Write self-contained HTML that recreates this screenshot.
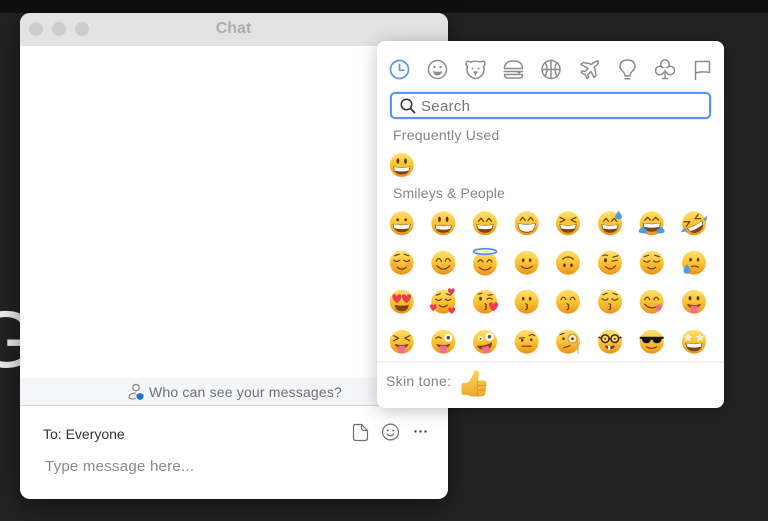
<!DOCTYPE html>
<html><head><meta charset="utf-8"><style>
html,body{margin:0;padding:0;width:768px;height:521px;overflow:hidden;background:#222;font-family:"Liberation Sans",sans-serif}
#all{position:absolute;left:0;top:0;width:768px;height:521px;overflow:hidden;filter:blur(.35px)}
.a{position:absolute;white-space:nowrap}
#band{left:0;top:0;width:768px;height:13px;background:#0f0f0f}
#g{left:-26px;top:294px;font-size:81px;line-height:93px;color:#eee}
#win{left:20px;top:13px;width:428px;height:486px;background:#fff;border-radius:10px;overflow:hidden;box-shadow:0 6px 24px rgba(0,0,0,.45)}
#tb{left:0;top:0;width:428px;height:33px;background:#e3e3e3}
.dot{position:absolute;top:9px;width:14px;height:14px;border-radius:50%;background:#cdcdcd}
#title{left:0;width:427px;top:7px;text-align:center;font-weight:bold;font-size:16px;line-height:18px;color:#acacac}
#ban{left:0;top:365px;width:428px;height:27px;background:#f5f6fa;border-bottom:1px solid #d6d6d8}
#pop{left:377px;top:41px;width:347px;height:367px;background:#fff;border-radius:8px;box-shadow:0 2px 18px rgba(0,0,0,.25)}
#search{left:389.5px;top:92px;width:317px;height:23px;border:2px solid #5c95ea;border-radius:5px;background:#fff;box-shadow:0 0 1px #5c95ea}
.lbl{font-size:14px;line-height:16px;color:#85858b}
svg{position:absolute;left:0;top:0;filter:blur(.25px)}
.e{fill:#5f3812}.l{fill:none;stroke:#6a3f12;stroke-width:1.2;stroke-linecap:round;stroke-linejoin:round}
.m{fill:#7a4615}.t{fill:#fff}.h{fill:#ee3b4e}.o{fill:#ef6d95}.d{fill:#4f9be8}
.i{fill:none;stroke:#8d8d8d;stroke-width:1.5;stroke-linecap:round;stroke-linejoin:round}
.k{fill:none;stroke:#6e6e72;stroke-width:1.2;stroke-linecap:round;stroke-linejoin:round}
</style></head><body>
<div id="all">
<div class="a" id="band"></div>
<div class="a" id="g">G</div>
<div class="a" id="win">
 <div class="a" id="tb">
  <div class="dot" style="left:9px"></div><div class="dot" style="left:32px"></div><div class="dot" style="left:55px"></div>
  <div class="a" id="title">Chat</div>
 </div>
 <div class="a" id="ban"></div>
</div>
<div class="a" style="left:149px;top:384px;font-size:14px;line-height:16px;color:#707074;letter-spacing:.18px">Who can see your messages?</div>
<div class="a" style="left:43px;top:426px;font-size:14px;line-height:16px;color:#333">To: Everyone</div>
<div class="a" style="left:45px;top:458px;font-size:15px;line-height:18px;color:#8a8a8a;letter-spacing:.25px">Type message here...</div>
<div class="a" id="pop"></div>
<div class="a" style="left:377px;top:361px;width:347px;height:2px;background:#f0f0f0"></div>
<div class="a" id="search"></div>
<div class="a" style="left:421px;top:98px;font-size:15px;line-height:18px;color:#76767a;letter-spacing:.3px">Search</div>
<div class="a lbl" style="left:393px;top:127px;letter-spacing:.25px">Frequently Used</div>
<div class="a lbl" style="left:393px;top:185px;letter-spacing:.14px">Smileys &amp; People</div>
<div class="a lbl" style="left:386px;top:373px;letter-spacing:.3px">Skin tone:</div>

<svg width="768" height="521" viewBox="0 0 768 521">
<defs>
<linearGradient id="f" x1="0" y1="0" x2="0" y2="1"><stop offset="0" stop-color="#ffe06e"/><stop offset=".5" stop-color="#fcc433"/><stop offset="1" stop-color="#ec921c"/></linearGradient>
<linearGradient id="u" x1="0" y1="0" x2="0" y2="1"><stop offset="0" stop-color="#ffd35a"/><stop offset="1" stop-color="#eea72c"/></linearGradient>
</defs>

<!-- window icons -->
<g transform="translate(136,392)"><circle cy="-4.500" r="3.200" fill="none" stroke="#7d7d85" stroke-width="1.100"/><path d="M-7 6Q-7 1 0 1M-7 6Q-4 7.500 0 6.500" fill="none" stroke="#7d7d85" stroke-width="1.100"/><path d="M4 1L7.500 2.500V5Q7 7 4 8Q1 7 .5 5V2.500Z" fill="#1a6fd8"/></g>
<path class="k" d="M353.500 426.500Q353.500 424.500 355.500 424.500H361.500L367.500 430.500V438Q367.500 440.500 365 440.500H356Q353.500 440.500 353.500 438ZM361.500 424.500V428Q361.500 430.500 364 430.500H367.500"/>
<g transform="translate(390.500,432)"><circle r="7.900" class="k"/><circle cx="-2.700" cy="-1.500" r="1" fill="#6e6e72"/><circle cx="2.700" cy="-1.500" r="1" fill="#6e6e72"/><path class="k" d="M-3.500 2Q0 5.500 3.500 2"/></g>
<g fill="#444"><circle cx="415.500" cy="431.500" r="1.200"/><circle cx="420.500" cy="431.500" r="1.200"/><circle cx="425.500" cy="431.500" r="1.200"/></g>

<!-- search glass -->
<g transform="translate(406.500,104.500)"><circle r="5.200" fill="none" stroke="#333" stroke-width="1.500"/><path d="M3.800 3.800L8 8" stroke="#333" stroke-width="1.800" stroke-linecap="round"/></g>

<!-- tabs -->
<g transform="translate(399.500,69.500)"><circle r="9" fill="none" stroke="#5c95ea" stroke-width="1.700"/><path d="M0-5V.8H4.500" fill="none" stroke="#5c95ea" stroke-width="1.700" stroke-linecap="round" stroke-linejoin="round"/></g>
<g transform="translate(437.500,69.500)"><circle r="9" class="i"/><circle cx="-3" cy="-2.500" r="1.200" fill="#8d8d8d"/><circle cx="3" cy="-2.500" r="1.200" fill="#8d8d8d"/><path d="M-4.500 1.500Q0 3 4.500 1.500Q4 6 0 6Q-4 6-4.500 1.500Z" fill="#8d8d8d"/></g>
<g transform="translate(475.500,69.500)"><path class="i" d="M-5-7.500Q0-9 5-7.500Q8.500-9.500 9.300-6.500Q9.800-4.500 8-3Q9.500 1 7 5Q3.500 9 0 9Q-3.500 9-7 5Q-9.500 1-8-3Q-9.800-4.500-9.300-6.500Q-8.500-9.500-5-7.500Z"/><circle cx="-3" cy="-1" r="1" fill="#8d8d8d"/><circle cx="3" cy="-1" r="1" fill="#8d8d8d"/><path class="i" d="M-1.500 2.500H1.500L0 4ZM0 4V5.500"/></g>
<g transform="translate(513.500,69.500)"><path class="i" d="M-9-1Q-9-8.500 0-8.500Q9-8.500 9-1ZM-9.300 2H9.300M-9 5H9Q9 8.500 6 8.500H-6Q-9 8.500-9 5Z"/><path d="M2 2L6 4.500L8 2Z" fill="#8d8d8d"/></g>
<g transform="translate(551,69.500)"><circle r="9" class="i"/><path class="i" d="M0-9V9M-9 0H9M-6-7Q-2-1-6 7M6-7Q2-1 6 7"/></g>
<g transform="translate(589,69.500)"><path class="i" d="M8.500-8.500Q10-9.500 9-6.500Q8.500-5 5-2L6-.5L7 6L5 8L2 2L-1 5L-.5 8L-2 9L-4 5L-8 3L-7 1.500L-4 2L-1-1L-8-5L-6-7L.5-6L2-5Q6-8 8.500-8.500Z"/></g>
<g transform="translate(627.500,69.500)"><path class="i" d="M-2.500 6.500Q-2.500 4-5 1.500Q-8-1.500-7.500-4Q-6.500-9.500 0-9.500Q6.500-9.500 7.500-4Q8-1.500 5 1.500Q2.500 4 2.500 6.500ZM-2.500 9.300H2.500"/></g>
<g transform="translate(665,69.500)"><circle cy="-5.300" r="4.300" class="i" fill="#fff"/><circle cx="-5.200" cy="1" r="4.300" class="i" fill="#fff"/><circle cx="5.200" cy="1" r="4.300" class="i" fill="#fff"/><path d="M-2.200-1.500L2.200-1.500L3 2L-3 2Z" fill="#fff"/><path class="i" d="M0 1V8.500M-2.500 9H2.500"/></g>
<g transform="translate(702.500,69.500)"><path class="i" d="M-7 10V-8H7V3Q0 1.500-7 3.500"/></g>

<!-- frequently used -->
<g transform="translate(401.700,165)"><circle r="12" fill="url(#f)"/><ellipse class="e" cx="-3.800" cy="-4" rx="1.400" ry="2.800"/><ellipse class="e" cx="3.800" cy="-4" rx="1.400" ry="2.800"/><path class="m" d="M-8.500 1.500Q0 3.500 8.500 1.500Q8 9.500 0 9.500Q-8 9.500-8.500 1.500Z"/><path class="t" d="M-7.800 2Q0 3.800 7.800 2L7 5.600Q0 7.300-7 5.600Z"/></g>

<!-- row 1 -->
<g transform="translate(401.700,223.300)"><circle r="12" fill="url(#f)"/><circle class="e" cx="-4" cy="-3.500" r="1.400"/><circle class="e" cx="4" cy="-3.500" r="1.400"/><path class="m" d="M-9 .5Q0 2.500 9 .5Q8.500 9 0 9Q-8.500 9-9 .5Z"/><path class="t" d="M-8.300 1Q0 2.800 8.300 1L7.500 5Q0 6.600-7.500 5Z"/></g>
<g transform="translate(443.300,223.300)"><circle r="12" fill="url(#f)"/><ellipse class="e" cx="-3.800" cy="-4" rx="1.400" ry="2.800"/><ellipse class="e" cx="3.800" cy="-4" rx="1.400" ry="2.800"/><path class="m" d="M-8.500 1.500Q0 3.500 8.500 1.500Q8 9.500 0 9.500Q-8 9.500-8.500 1.500Z"/><path class="t" d="M-7.800 2Q0 3.800 7.800 2L7 5.600Q0 7.300-7 5.600Z"/></g>
<g transform="translate(485,223.300)"><circle r="12" fill="url(#f)"/><path class="l" d="M-6.500-2L-4-5L-1.500-2M1.500-2L4-5L6.500-2"/><path class="m" d="M-8.500 1Q0 3 8.500 1Q8 9.500 0 9.500Q-8 9.500-8.500 1Z"/><path class="t" d="M-7.800 1.500Q0 3.300 7.800 1.500L7 5.100Q0 6.800-7 5.100Z"/></g>
<g transform="translate(526.700,223.300)"><circle r="12" fill="url(#f)"/><path class="l" d="M-6.500-3L-4-6L-1.500-3M1.500-3L4-6L6.500-3"/><path class="m" d="M-9 0Q0 2 9 0Q8.500 9.500 0 9.500Q-8.500 9.500-9 0Z"/><path class="t" d="M-8.400 .5Q0 2.300 8.400 .5Q8 8.500 0 8.500Q-8 8.500-8.400 .5Z"/></g>
<g transform="translate(568,223.300)"><circle r="12" fill="url(#f)"/><path class="l" d="M-8-6L-3-3.500L-8-1M8-6L3-3.500L8-1"/><path class="m" d="M-8.500 1Q0 3 8.500 1Q8 9.500 0 9.500Q-8 9.500-8.500 1Z"/><path class="t" d="M-7.800 1.500Q0 3.300 7.800 1.500L7 5.100Q0 6.800-7 5.100Z"/></g>
<g transform="translate(610,223.300)"><circle r="12" fill="url(#f)"/><path class="l" d="M-6.500-2L-4-5L-1.500-2M1.500-2L4-5L6.500-2"/><path class="m" d="M-8.500 1Q0 3 8.500 1Q8 9.500 0 9.500Q-8 9.500-8.500 1Z"/><path class="t" d="M-7.800 1.500Q0 3.300 7.800 1.500L7 5.100Q0 6.800-7 5.100Z"/><path class="d" d="M8.500-12.500Q12-8 12-6.500Q12-4 8.500-4Q5-4 5-6.500Q5-8 8.500-12.500Z"/></g>
<g transform="translate(651.700,223.300)"><circle r="12" fill="url(#f)"/><path class="l" d="M-7-3L-4-6L-1-3M1-3L4-6L7-3"/><path class="m" d="M-9-.5Q0 1.500 9-.5Q8.500 8.500 0 8.500Q-8.500 8.500-9-.5Z"/><path class="t" d="M-8.300 0Q0 1.800 8.300 0L7.500 3.600Q0 5.200-7.500 3.600Z"/><path class="d" d="M-9 3.500Q-4 7-4.500 8.500Q-5.500 10.500-9 10Q-13 10-13 7.500Q-12.500 5.500-9 3.500ZM9 3.500Q4 7 4.500 8.500Q5.500 10.500 9 10Q13 10 13 7.500Q12.500 5.500 9 3.500Z"/></g>
<g transform="translate(694,223.300)"><circle r="12" fill="url(#f)"/><g transform="rotate(-28)"><path class="l" d="M-8-6L-3-3.500L-8-1M8-6L3-3.500L8-1"/><path class="m" d="M-8.500 1Q0 3 8.500 1Q8 9.500 0 9.500Q-8 9.500-8.500 1Z"/><path class="t" d="M-7.800 1.500Q0 3.300 7.800 1.500L7 5.100Q0 6.800-7 5.100Z"/></g><path class="d" d="M9-4L13.500-8L12-2ZM-9 4L-13.500 9L-7 8Z"/></g>

<!-- row 2 -->
<g transform="translate(401.700,262.700)"><circle r="12" fill="url(#f)"/><circle cx="-7.500" cy="1.500" r="3" fill="#f79a4d" opacity=".5"/><circle cx="7.500" cy="1.500" r="3" fill="#f79a4d" opacity=".5"/><path class="l" d="M-8-2.500Q-4.500 0-2-2.500M2-2.500Q4.500 0 8-2.500M-7-7L-2.500-8.500M7-7L2.500-8.500M-4.500 4.500Q0 8.500 4.500 4.500"/></g>
<g transform="translate(443.300,262.700)"><circle r="12" fill="url(#f)"/><path class="l" d="M-7-1.500Q-4.500-7-2-1.500M2-1.500Q4.500-7 7-1.500M-6.500 3Q0 10 6.500 3"/></g>
<g transform="translate(485,263.500)"><circle r="12" fill="url(#f)"/><path class="l" d="M-7-1.500Q-4.500-6-2-1.500M2-1.500Q4.500-6 7-1.500M-6 3.500Q0 9.500 6 3.500"/><ellipse cy="-12" rx="11.500" ry="2.800" fill="#fff4c0" stroke="#4f8ee8" stroke-width="1.700"/></g>
<g transform="translate(526.700,262.700)"><circle r="12" fill="url(#f)"/><ellipse class="e" cx="-3.500" cy="-2.500" rx="1.300" ry="1.800"/><ellipse class="e" cx="3.500" cy="-2.500" rx="1.300" ry="1.800"/><path class="l" d="M-5.500 3.500Q0 8 5.500 3.500"/></g>
<g transform="translate(568,262.700)"><circle r="12" fill="url(#f)"/><ellipse class="e" cx="-3.500" cy="2.500" rx="1.300" ry="1.800"/><ellipse class="e" cx="3.500" cy="2.500" rx="1.300" ry="1.800"/><path class="l" d="M-5.500-3.500Q0-8 5.500-3.500"/></g>
<g transform="translate(610,262.700)"><circle r="12" fill="url(#f)"/><ellipse class="e" cx="-4.500" cy="-2.500" rx="1.500" ry="2"/><path class="l" d="M-7-7Q-4.500-8.500-2.500-7M2-1.500L7.500-2.500M3-5.500L8-7M-4.500 4Q1 9 5.500 3"/></g>
<g transform="translate(651.700,262.700)"><circle r="12" fill="url(#f)"/><path class="l" d="M-8-2Q-4.500 1-2-2M2-2Q4.500 1 8-2M-7.500-6L-3-7.500M7.500-6L3-7.500M-4 4.500Q0 8 4 4.500"/></g>
<g transform="translate(694,262.700)"><circle r="12" fill="url(#f)"/><ellipse class="e" cx="-3.500" cy="-3" rx="1.300" ry="1.800"/><ellipse class="e" cx="4" cy="-3" rx="1.300" ry="1.800"/><path class="l" d="M-2.500 4Q1 2.500 4.500 4.500"/><path class="d" d="M-7 1.500Q-3.500 6-3.500 8Q-3.500 11-7 11Q-10.500 11-10.500 8Q-10.500 6-7 1.500Z"/></g>

<!-- row 3 -->
<g transform="translate(401.700,301.700)"><circle r="12" fill="url(#f)"/><g class="h"><path transform="translate(-4.800,-3) scale(1.500)" d="M0 3C-4 0-3.500-3-1.700-3C-.8-3 0-2 0-1.500C0-2 .8-3 1.700-3C3.500-3 4 0 0 3Z"/><path transform="translate(4.800,-3) scale(1.500)" d="M0 3C-4 0-3.500-3-1.700-3C-.8-3 0-2 0-1.500C0-2 .8-3 1.700-3C3.500-3 4 0 0 3Z"/></g><path class="m" d="M-7 3Q0 5 7 3Q6.500 9.500 0 9.500Q-6.500 9.500-7 3Z"/></g>
<g transform="translate(443.300,301.700)"><circle r="12" fill="url(#f)"/><path class="l" d="M-7.500-2.500Q-4.500 0-2-2.500M2-2.500Q4.500 0 7.500-2.500M-7-6.500L-3-8M7-6.500L3-8M-4 3.500Q0 7 4 3.500"/><g class="h"><path transform="translate(8,-10) scale(1.100)" d="M0 3C-4 0-3.500-3-1.700-3C-.8-3 0-2 0-1.500C0-2 .8-3 1.700-3C3.500-3 4 0 0 3Z"/><path transform="translate(-10,6) scale(1.100)" d="M0 3C-4 0-3.500-3-1.700-3C-.8-3 0-2 0-1.500C0-2 .8-3 1.700-3C3.500-3 4 0 0 3Z"/><path transform="translate(8.500,9) scale(1.100)" d="M0 3C-4 0-3.500-3-1.700-3C-.8-3 0-2 0-1.500C0-2 .8-3 1.700-3C3.500-3 4 0 0 3Z"/></g></g>
<g transform="translate(485,301.700)"><circle r="12" fill="url(#f)"/><ellipse class="e" cx="-4.500" cy="-3" rx="1.400" ry="1.900"/><path class="l" d="M-7-7.500L-3-8.500M2-2.500Q4.500-5 7-2.500M3-6.500L7-7M0 2Q2.500 3.500 .5 5Q2.500 6.500 0 8"/><path class="h" transform="translate(8.500,5) scale(1.500)" d="M0 3C-4 0-3.500-3-1.700-3C-.8-3 0-2 0-1.500C0-2 .8-3 1.700-3C3.500-3 4 0 0 3Z"/></g>
<g transform="translate(526.700,301.700)"><circle r="12" fill="url(#f)"/><ellipse class="e" cx="-3.500" cy="-3" rx="1.300" ry="1.800"/><ellipse class="e" cx="3.500" cy="-3" rx="1.300" ry="1.800"/><path class="l" d="M-1 2Q2 3.500 0 5Q2 6.500-1 8"/></g>
<g transform="translate(568,301.700)"><circle r="12" fill="url(#f)"/><path class="l" d="M-7-2Q-4.500-7-2-2M2-2Q4.500-7 7-2M-1 2Q2 3.500 0 5Q2 6.500-1 8"/></g>
<g transform="translate(610,301.700)"><circle r="12" fill="url(#f)"/><path class="l" d="M-8-3Q-4.500 0-2-3M2-3Q4.500 0 8-3M-7-7L-3-8.500M7-7L3-8.500M-1 2Q2 3.500 0 5Q2 6.500-1 8"/></g>
<g transform="translate(651.700,301.700)"><circle r="12" fill="url(#f)"/><path class="l" d="M-7-2Q-4.500-7-2-2M2-2Q4.500-7 7-2M-7 2.500Q-1 9 6.500 4"/><ellipse class="o" cx="7" cy="6" rx="3" ry="3.500" transform="rotate(30 7 6)"/></g>
<g transform="translate(694,301.700)"><circle r="12" fill="url(#f)"/><ellipse class="e" cx="-4" cy="-3.500" rx="1.500" ry="2"/><ellipse class="e" cx="4" cy="-3.500" rx="1.500" ry="2"/><path class="m" d="M-7 2Q0 4.500 7 2Q6 6.500 0 6.500Q-6 6.500-7 2Z"/><path class="o" d="M-3.500 4H3.500V8Q3.500 11.500 0 11.500Q-3.500 11.500-3.500 8Z"/></g>

<!-- row 4 -->
<g transform="translate(401.700,341.700)"><circle r="12" fill="url(#f)"/><path class="l" d="M-8-6L-3-3.500L-8-1M8-6L3-3.500L8-1"/><path class="m" d="M-7 2Q0 4.500 7 2Q6 6.500 0 6.500Q-6 6.500-7 2Z"/><path class="o" d="M-3.500 4H3.500V8Q3.500 11.500 0 11.500Q-3.500 11.500-3.500 8Z"/></g>
<g transform="translate(443.300,341.700)"><circle r="12" fill="url(#f)"/><path class="l" d="M-7.500-3.500Q-4.500-6-2-3.500"/><circle cx="5" cy="-4" r="4" fill="#fff"/><circle cx="5" cy="-4" r="1.800" fill="#555"/><path class="m" d="M-7 2Q0 4.500 7 2Q6 6.500 0 6.500Q-6 6.500-7 2Z"/><path class="o" d="M-3.500 4H3.500V8Q3.500 11.500 0 11.500Q-3.500 11.500-3.500 8Z"/></g>
<g transform="translate(485,341.700)"><circle r="12" fill="url(#f)"/><circle cx="-4.500" cy="-3" r="2.200" fill="#fff"/><circle cx="-4.500" cy="-3" r="1" fill="#555"/><circle cx="4.500" cy="-5" r="4.200" fill="#fff"/><circle cx="4.500" cy="-5" r="1.800" fill="#555"/><path class="m" d="M-8 4Q0 4.500 7 .5Q7 8 0 8Q-6 8.500-8 4Z"/><path class="o" d="M-3 5.500L3.500 4L5 8Q5 11.500 1 11.500Q-2 11.500-3 8Z"/></g>
<g transform="translate(526.700,341.700)"><circle r="12" fill="url(#f)"/><path class="l" d="M-7.500-3.500L-2.500-4M2.500-6Q5-8.500 8-6M-4.500 4.500H4.500"/><circle class="e" cx="-4.500" cy="-1.500" r="1.300"/><circle class="e" cx="4.500" cy="-2" r="1.300"/></g>
<g transform="translate(568,341.700)"><circle r="12" fill="url(#f)"/><circle cx="4.500" cy="-3" r="4.500" fill="#fff" fill-opacity=".6" stroke="#a89a70" stroke-width="1.200"/><circle class="e" cx="4.500" cy="-3" r="1.300"/><circle class="e" cx="-4.500" cy="-3" r="1.300"/><path class="l" d="M-8-7L-4-8.500M-4 6L2 4"/><path d="M9-1Q10.500 6 10 12" fill="none" stroke="#a8a8a0" stroke-width="1"/></g>
<g transform="translate(610,341.700)"><circle r="12" fill="url(#f)"/><g fill="#f7e6b0" fill-opacity=".5" stroke="#3c2710" stroke-width="1.500"><circle cx="-4.800" cy="-3" r="3.800"/><circle cx="4.800" cy="-3" r="3.800"/></g><path d="M-1-3H1M-8.500-3.500L-11.500-4.500M8.500-3.500L11.500-4.500" stroke="#3c2710" stroke-width="1.500"/><circle class="e" cx="-4.800" cy="-3" r="1"/><circle class="e" cx="4.800" cy="-3" r="1"/><path class="m" d="M-5 3.500Q0 5 5 3.500Q4.500 7.500 0 7.500Q-4.500 7.500-5 3.500Z"/><path class="t" d="M-2 4.200H.3V8H-2Z"/></g>
<g transform="translate(651.700,341.700)"><circle r="12" fill="url(#f)"/><path d="M-12-5H12V-3L10-3Q9.500 1.500 5 1.500Q1.500 1.500 .8-2H-.8Q-1.500 1.500-5 1.500Q-9.500 1.500-10-3L-12-3Z" fill="#17171a"/><path class="l" d="M-5 5Q0 8.500 5 5"/></g>
<g transform="translate(694,341.700)"><circle r="12" fill="url(#f)"/><path class="m" d="M-8.500 1Q0 3 8.500 1Q8 9.500 0 9.500Q-8 9.500-8.500 1Z"/><path class="t" d="M-7.800 1.500Q0 3.300 7.800 1.500L7 5.100Q0 6.800-7 5.100Z"/><g fill="#fff3c4" stroke="#e6b84a" stroke-width=".5"><path d="M-6-10L-4.500-6.500L-.5-6L-3.500-3.500L-2.500 .5L-6-1.500L-9.500 .5L-8.500-3.500L-11.500-6L-7.500-6.500Z"/><path d="M6-10L7.500-6.500L11.500-6L8.500-3.500L9.500 .5L6-1.500L2.500 .5L3.500-3.500L.5-6L4.500-6.500Z"/></g></g>

<!-- thumb -->
<path fill="url(#u)" d="M461.500 385Q461.500 383 464 383L468 382.500C471 379.500 473 375 473.500 372.500C475 368.500 479.500 370 479 374.500L478 380.500H484Q487 381 486.500 384L485.500 393Q485 396.500 481 396.500H471L468 395H464Q461.500 395 461.500 392.500Z"/>
<path d="M478 380.500Q476 383 478 385.500Q476 387.500 478 390Q476.500 392.500 478 396M478 385.500H486M478 390H485.500" fill="none" stroke="#d08d22" stroke-width=".7"/>
</svg>
</div>
</body></html>
